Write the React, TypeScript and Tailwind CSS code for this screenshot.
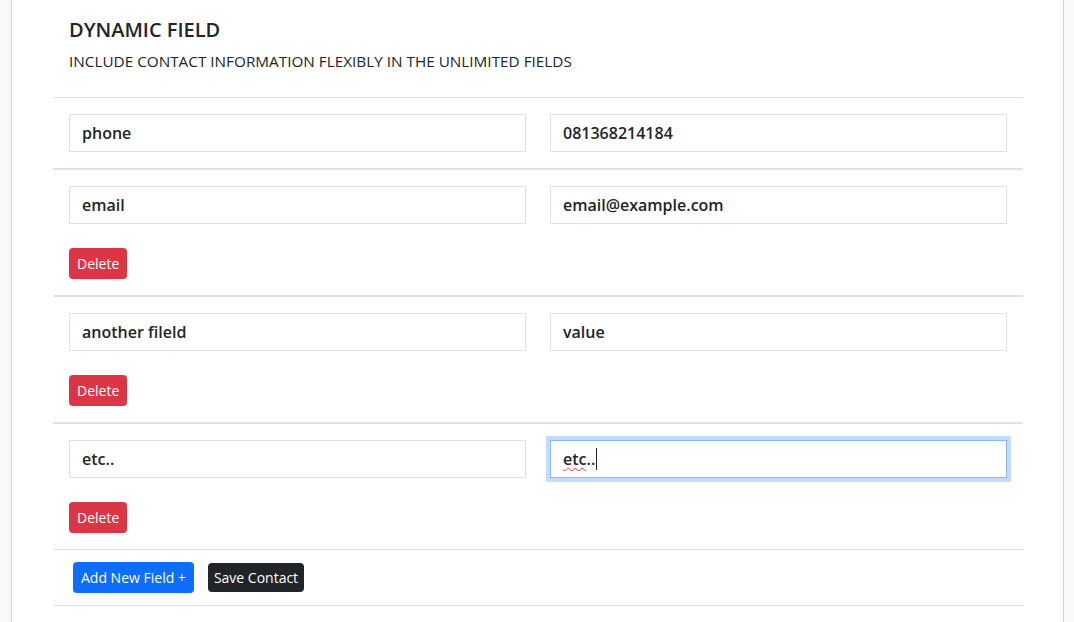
import React from 'react';

type Field = { key: string; value: string; deletable: boolean };

const fields: Field[] = [
  { key: 'phone', value: '081368214184', deletable: false },
  { key: 'email', value: 'email@example.com', deletable: true },
  { key: 'another fileld', value: 'value', deletable: true },
];

const inputClass =
  'block w-full h-[38px] px-3 border border-[#dee2e6] bg-white text-base font-semibold text-[#212529] leading-6 outline-none';

function DeleteButton() {
  return (
    <button className="mt-6 h-[31px] px-2 rounded bg-[#dc3545] text-white text-sm leading-[21px]">
      Delete
    </button>
  );
}

function FieldRow({ field }: { field: Field }) {
  return (
    <div className="p-4 border-b-2 border-[#dee2e6]">
      <div className="grid grid-cols-2 gap-6">
        <input className={inputClass} defaultValue={field.key} />
        <input className={inputClass} defaultValue={field.value} />
      </div>
      {field.deletable && <DeleteButton />}
    </div>
  );
}

export default function App() {
  return (
    <div
      className="min-h-[622px] bg-[#f8f9fa] text-[#212529]"
      style={{ fontFamily: '"Open Sans", "Noto Sans", sans-serif' }}
    >
      <div className="ml-[11px] w-[1053px] min-h-[622px] border-x border-[#d3d3d3] bg-white pl-[41px] pr-[40px]">
        <div className="px-4 pt-[18px] pb-[24px]">
          <h5 className="text-[20px] font-semibold leading-6 mb-[7px]">DYNAMIC FIELD</h5>
          <p className="text-[15.3px] leading-6">INCLUDE CONTACT INFORMATION FLEXIBLY IN THE UNLIMITED FIELDS</p>
        </div>
        <hr className="border-t border-[#e0e0e0]" />
        {fields.map((f) => (
          <FieldRow key={f.key} field={f} />
        ))}
        <div className="p-4">
          <div className="grid grid-cols-2 gap-6">
            <input className={inputClass} defaultValue="etc.." />
            <div className="flex items-center h-[38px] px-3 border border-[#86b7fe] bg-white text-base font-semibold leading-6 shadow-[0_0_0_4px_rgba(13,110,253,0.25)]">
              <span className="underline decoration-wavy decoration-[#e53935] decoration-1 underline-offset-2">etc</span>
              <span>..</span>
              <span className="ml-px w-px h-[22px] bg-[#212529]" />
            </div>
          </div>
          <DeleteButton />
        </div>
        <hr className="border-t border-[#e0e0e0]" />
        <div className="flex items-center gap-[14px] pl-5 py-3">
          <button className="h-[31px] px-2 rounded bg-[#0d6efd] text-white text-sm leading-[21px]">
            Add New Field +
          </button>
          <button className="h-[29px] px-[6px] rounded bg-[#212529] text-white text-sm leading-[21px]">
            Save Contact
          </button>
        </div>
        <hr className="border-t border-[#e0e0e0]" />
      </div>
    </div>
  );
}
